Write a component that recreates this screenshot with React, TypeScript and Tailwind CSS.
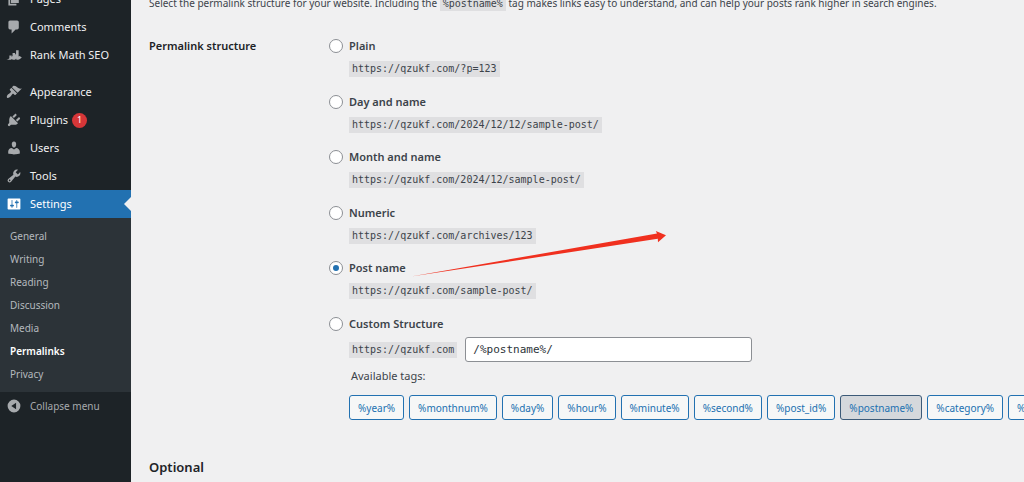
import { useState } from "react";
import type { ReactNode } from "react";

const SITE = "https://qzukf.com";

const ICONS = {
  page: "M6 15V2h10v13H6zm-1 1h8v2H3V5h2v11z",
  comments:
    "M5 2h9c1.1 0 2 .9 2 2v7c0 1.1-.9 2-2 2h-2l-5 5v-5H5c-1.1 0-2-.9-2-2V4c0-1.1.9-2 2-2z",
  rank: "M.5 16c1.600-.300 2.700-1 3.700-1.900V10.500h2.900v2L8.200 11V7.500h3.200v2.300l1.200-1.500V4h3.200v8l1.200-.8 2.800 1.900-2.700 2.300-1.300.1V16h-2.700l-.5-1.500L11.400 16H8.200l-.6-1L6 16H4.200z",
  appearance:
    "M14.48 11.06L7.41 3.99l1.5-1.5c.5-.56 2.3-.47 3.51.32 1.21.8 1.43 1.28 2.91 2.1 1.18.64 2.45 1.26 4.45.85zm-.71.71L6.7 4.7 4.93 6.47c-.39.39-.39 1.02 0 1.41l1.06 1.06c.39.39.39 1.03 0 1.42-.6.6-1.43 1.11-2.21 1.69-.35.26-.7.53-1.01.84C1.43 14.23.4 16.08 1.4 17.07c.99 1 2.84-.03 4.18-1.36.31-.31.58-.66.85-1.02.57-.78 1.08-1.61 1.69-2.21.39-.39 1.02-.39 1.41 0l1.06 1.06c.39.39 1.02.39 1.41 0z",
  plugins:
    "M13.11 4.36L9.87 7.6 8 5.73l3.24-3.24c.35-.34 1.05-.2 1.56.32.52.51.66 1.21.31 1.55zm-8 1.77l.91-1.12 9.01 9.01-1.19.84c-.71.71-2.63 1.16-3.82 1.16H6.14L4.9 17.26c-.59.59-1.54.59-2.12 0-.59-.58-.59-1.53 0-2.12l1.24-1.24v-3.88c0-1.13.4-3.19 1.09-3.89zm7.26 3.97l3.24-3.24c.34-.35 1.04-.21 1.55.31.52.51.66 1.21.31 1.55l-3.24 3.25z",
  users:
    "M10 9.25c-2.27 0-2.73-3.44-2.73-3.44C7 4.02 7.82 2 9.97 2c2.16 0 2.98 2.02 2.71 3.81 0 0-.41 3.44-2.68 3.44zm0 2.57L12.72 10c2.39 0 4.52 2.33 4.52 4.53v2.49s-3.65 1.13-7.24 1.13c-3.65 0-7.24-1.13-7.24-1.13v-2.49c0-2.25 1.94-4.48 4.47-4.48z",
  tools:
    "M16.68 9.77c-1.34 1.34-3.3 1.67-4.95.99l-5.41 6.52c-.99.99-2.59.99-3.58 0s-.99-2.59 0-3.57l6.52-5.42c-.68-1.65-.35-3.61.99-4.95 1.28-1.28 3.12-1.62 4.72-1.06l-2.89 2.89 2.82 2.82 2.86-2.87c.53 1.58.18 3.39-1.08 4.65zM3.81 16.21c.4.39 1.04.39 1.43 0 .4-.4.4-1.04 0-1.43-.39-.4-1.03-.4-1.43 0-.39.39-.39 1.03 0 1.43z",
  settings:
    "M18 16V4c0-.55-.45-1-1-1H3c-.55 0-1 .45-1 1v12c0 .55.45 1 1 1h14c.55 0 1-.45 1-1zM8 11h1c.55 0 1 .45 1 1s-.45 1-1 1H8v1.5c0 .28-.22.5-.5.5s-.5-.22-.5-.5V13H6c-.55 0-1-.45-1-1s.45-1 1-1h1V5.5c0-.28.22-.5.5-.5s.5.22.5.5V11zm5-2h-1c-.55 0-1-.45-1-1s.45-1 1-1h1V5.5c0-.28.22-.5.5-.5s.5.22.5.5V7h1c.55 0 1 .45 1 1s-.45 1-1 1h-1v5.5c0 .28-.22.5-.5.5s-.5-.22-.5-.5V9z",
  collapse:
    "M10 2a8 8 0 1 0 0 16 8 8 0 0 0 0-16zM12.6 6v8L6.6 10z",
};

type IconName = keyof typeof ICONS;

function Icon({ name }: { name: IconName }) {
  return (
    <svg viewBox="0 0 20 20" className="size-4 shrink-0" fill="currentColor" fillRule="evenodd" aria-hidden="true">
      <path d={ICONS[name]} />
    </svg>
  );
}

function MenuItem({ icon, label, badge }: { icon: IconName; label: string; badge?: string }) {
  return (
    <li>
      <a href="#" className="flex h-7 items-center gap-2 pl-1.5 text-[#f0f0f1]">
        <span className="text-[#a7aaad]">
          <Icon name={icon} />
        </span>
        {label}
        {badge && (
          <span className="-ml-1 flex size-[15px] items-center justify-center rounded-full bg-[#d63638] text-[9px] text-white">
            {badge}
          </span>
        )}
      </a>
    </li>
  );
}

const SUBMENU = ["General", "Writing", "Reading", "Discussion", "Media", "Permalinks", "Privacy"];

function Sidebar() {
  return (
    <nav className="w-[131px] shrink-0 bg-[#1d2327] text-[11px]" aria-label="Main menu">
      <ul className="-mt-[15px]">
        <MenuItem icon="page" label="Pages" />
        <MenuItem icon="comments" label="Comments" />
        <MenuItem icon="rank" label="Rank Math SEO" />
        <li className="h-[9px]" />
        <MenuItem icon="appearance" label="Appearance" />
        <MenuItem icon="plugins" label="Plugins" badge="1" />
        <MenuItem icon="users" label="Users" />
        <MenuItem icon="tools" label="Tools" />
        <li>
          <a href="#" className="flex h-7 items-center gap-2 bg-[#2271b1] pl-1.5 text-white">
            <Icon name="settings" />
            <span className="grow">Settings</span>
            <span className="border-y-[7px] border-r-[7px] border-y-transparent border-r-[#f0f0f1]" />
          </a>
          <ul className="bg-[#2c3338] pt-1.5 pb-[7px]">
            {SUBMENU.map((item) => (
              <li key={item}>
                <a
                  href="#"
                  className={
                    item === "Permalinks"
                      ? "flex h-[23px] items-center pl-2.5 text-[10px] font-semibold text-white"
                      : "flex h-[23px] items-center pl-2.5 text-[10px] text-[#b4b9be]"
                  }
                >
                  {item}
                </a>
              </li>
            ))}
          </ul>
        </li>
        <li>
          <button type="button" className="flex h-7 w-full items-center gap-2 pl-1.5 text-[10px] text-[#a7aaad]">
            <Icon name="collapse" />
            Collapse menu
          </button>
        </li>
      </ul>
    </nav>
  );
}

function Code({ children }: { children: ReactNode }) {
  return (
    <code className="bg-[#dfdfe1] px-[3px] py-0.5 font-['DejaVu_Sans_Mono',monospace] text-[10px] leading-3">
      {children}
    </code>
  );
}

const STRUCTURES = [
  { id: "plain", label: "Plain", example: "/?p=123" },
  { id: "day", label: "Day and name", example: "/2024/12/12/sample-post/" },
  { id: "month", label: "Month and name", example: "/2024/12/sample-post/" },
  { id: "numeric", label: "Numeric", example: "/archives/123" },
  { id: "postname", label: "Post name", example: "/sample-post/" },
];

const TAGS = ["year", "monthnum", "day", "hour", "minute", "second", "post_id", "postname", "category", "author"];

function Choice({
  id,
  label,
  selected,
  onSelect,
}: {
  id: string;
  label: string;
  selected: string;
  onSelect: (id: string) => void;
}) {
  return (
    <div className="flex h-4 items-center gap-1.5">
      <input
        type="radio"
        id={id}
        name="structure"
        checked={selected === id}
        onChange={() => onSelect(id)}
        className="size-3.5 appearance-none rounded-full border border-[#8c8f94] bg-white p-[3px] before:block before:size-full before:rounded-full checked:before:bg-[#2271b1]"
      />
      <label htmlFor={id} className="font-semibold">
        {label}
      </label>
    </div>
  );
}

export default function App() {
  const [selected, setSelected] = useState("postname");
  const [custom, setCustom] = useState("/%postname%/");

  return (
    <div className="flex h-screen overflow-hidden bg-[#f0f0f1] font-['Noto_Sans',sans-serif] text-[11px] leading-4 text-[#3c434a]">
      <Sidebar />
      <main className="relative min-w-0 grow overflow-hidden pl-[18px]">
        <p className="-mt-[5px] text-[10px] whitespace-nowrap">
          Select the permalink structure for your website. Including the <Code>%postname%</Code> tag makes links easy to
          understand, and can help your posts rank higher in search engines.
        </p>
        <div className="mt-[27px] flex">
          <h3 id="structure-heading" className="w-[180px] shrink-0 font-semibold text-[#1d2327]">
            Permalink structure
          </h3>
          <fieldset aria-labelledby="structure-heading" className="min-w-0 grow">
            <div className="grid min-h-[278px] auto-rows-fr">
              {STRUCTURES.map((s) => (
                <div key={s.id}>
                  <Choice id={s.id} label={s.label} selected={selected} onSelect={setSelected} />
                  <p className="mt-[7px] flex pl-5">
                    <Code>{SITE + s.example}</Code>
                  </p>
                </div>
              ))}
            </div>
            <Choice id="custom" label="Custom Structure" selected={selected} onSelect={setSelected} />
            <div className="mt-[5px] flex items-center gap-2 pl-5">
              <Code>{SITE}</Code>
              <input
                type="text"
                aria-label="Custom structure"
                value={custom}
                onChange={(e) => setCustom(e.target.value)}
                className="h-[25px] w-[287px] rounded-[3px] border border-[#8c8f94] bg-white px-[7px] font-['DejaVu_Sans_Mono',monospace] text-[11px] text-[#2c3338]"
              />
            </div>
            <p className="mt-1.5 pl-[22px]">Available tags:</p>
            <ul className="mt-[11px] flex gap-[5px] pl-5">
              {TAGS.map((tag) => (
                <li key={tag}>
                  <button
                    type="button"
                    aria-pressed={tag === "postname"}
                    className={
                      tag === "postname"
                        ? "h-[25px] rounded-[3px] border border-[#3c5a78] bg-[#d5d8dc] px-2 text-[10px] text-[#2271b1]"
                        : "h-[25px] rounded-[3px] border border-[#2271b1] bg-[#f6f7f7] px-2 text-[10px] text-[#2271b1]"
                    }
                  >
                    %{tag}%
                  </button>
                </li>
              ))}
            </ul>
          </fieldset>
        </div>
        <h2 className="mt-[37px] text-[13px] leading-5 font-semibold text-[#1d2327]">Optional</h2>
        <svg
          viewBox="0 0 256 46"
          className="pointer-events-none absolute top-[231px] left-[280px] h-[46px] w-64"
          aria-hidden="true"
        >
          <path d="M0 45.500L246 2.600 244.800 0 255 4.200 247 11.200 246.800 7.800z" fill="#f0301f" />
        </svg>
      </main>
    </div>
  );
}
